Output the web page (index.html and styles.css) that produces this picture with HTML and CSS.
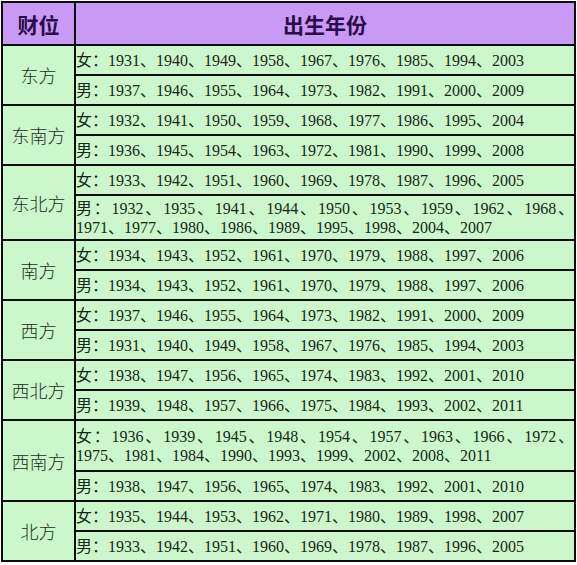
FILE: index.html
```html
<!DOCTYPE html>
<html lang="zh">
<head>
<meta charset="utf-8">
<title>财位</title>
<link rel="stylesheet" href="styles.css">
</head>
<body>
<table class="fortune">
  <colgroup><col class="c-dir"><col class="c-years"></colgroup>
  <thead>
    <tr class="r-head"><th class="h-dir">财位</th><th class="h-years">出生年份</th></tr>
  </thead>
  <tbody>
    <tr class="r"><td rowspan="2" class="dir">东方</td><td class="yrs">女：1931、1940、1949、1958、1967、1976、1985、1994、2003</td></tr>
    <tr class="r"><td class="yrs">男：1937、1946、1955、1964、1973、1982、1991、2000、2009</td></tr>

    <tr class="r"><td rowspan="2" class="dir">东南方</td><td class="yrs">女：1932、1941、1950、1959、1968、1977、1986、1995、2004</td></tr>
    <tr class="r"><td class="yrs">男：1936、1945、1954、1963、1972、1981、1990、1999、2008</td></tr>

    <tr class="r"><td rowspan="2" class="dir">东北方</td><td class="yrs">女：1933、1942、1951、1960、1969、1978、1987、1996、2005</td></tr>
    <tr class="r-tall"><td class="yrs">男：1932、1935、1941、1944、1950、1953、1959、1962、1968、1971、1977、1980、1986、1989、1995、1998、2004、2007</td></tr>

    <tr class="r"><td rowspan="2" class="dir">南方</td><td class="yrs">女：1934、1943、1952、1961、1970、1979、1988、1997、2006</td></tr>
    <tr class="r"><td class="yrs">男：1934、1943、1952、1961、1970、1979、1988、1997、2006</td></tr>

    <tr class="r"><td rowspan="2" class="dir">西方</td><td class="yrs">女：1937、1946、1955、1964、1973、1982、1991、2000、2009</td></tr>
    <tr class="r"><td class="yrs">男：1931、1940、1949、1958、1967、1976、1985、1994、2003</td></tr>

    <tr class="r"><td rowspan="2" class="dir">西北方</td><td class="yrs">女：1938、1947、1956、1965、1974、1983、1992、2001、2010</td></tr>
    <tr class="r"><td class="yrs">男：1939、1948、1957、1966、1975、1984、1993、2002、2011</td></tr>

    <tr class="r-taller"><td rowspan="2" class="dir">西南方</td><td class="yrs">女：1936、1939、1945、1948、1954、1957、1963、1966、1972、1975、1981、1984、1990、1993、1999、2002、2008、2011</td></tr>
    <tr class="r"><td class="yrs">男：1938、1947、1956、1965、1974、1983、1992、2001、2010</td></tr>

    <tr class="r"><td rowspan="2" class="dir">北方</td><td class="yrs">女：1935、1944、1953、1962、1971、1980、1989、1998、2007</td></tr>
    <tr class="r"><td class="yrs">男：1933、1942、1951、1960、1969、1978、1987、1996、2005</td></tr>
  </tbody>
</table>
</body>
</html>
```
FILE: styles.css
```css
html, body {
  margin: 0;
  padding: 0;
  background: #ffffff;
}

body {
  padding: 1px 0 0 1px;
}

.fortune {
  border-collapse: collapse;
  table-layout: fixed;
  width: 575px;
  background: #ccf6cc;
  font-family: "Liberation Serif", "Noto Sans CJK SC", serif;
  color: #142a16;
}

.c-dir { width: 73px; }
.c-years { width: auto; }

.fortune th,
.fortune td {
  border: 2px solid #0c0c0c;
  padding: 0;
}

.r-head { height: 43px; }
.r { height: 30px; }
.r-tall { height: 45px; }
.r-taller { height: 51px; }

.r-head th {
  background: #c99af5;
  color: #2a0c48;
  font-family: "Noto Sans CJK SC", sans-serif;
  font-weight: 700;
  font-size: 21px;
  line-height: 24px;
  text-align: center;
  vertical-align: middle;
}

.dir {
  font-family: "Noto Sans CJK SC", sans-serif;
  font-weight: 300;
  font-size: 18px;
  line-height: 22px;
  text-align: center;
  vertical-align: middle;
  color: #1c2e1c;
}

.yrs {
  font-size: 16px;
  line-height: 19px;
  padding: 0 4px 0 2px;
  text-align: justify;
  vertical-align: middle;
}
```
